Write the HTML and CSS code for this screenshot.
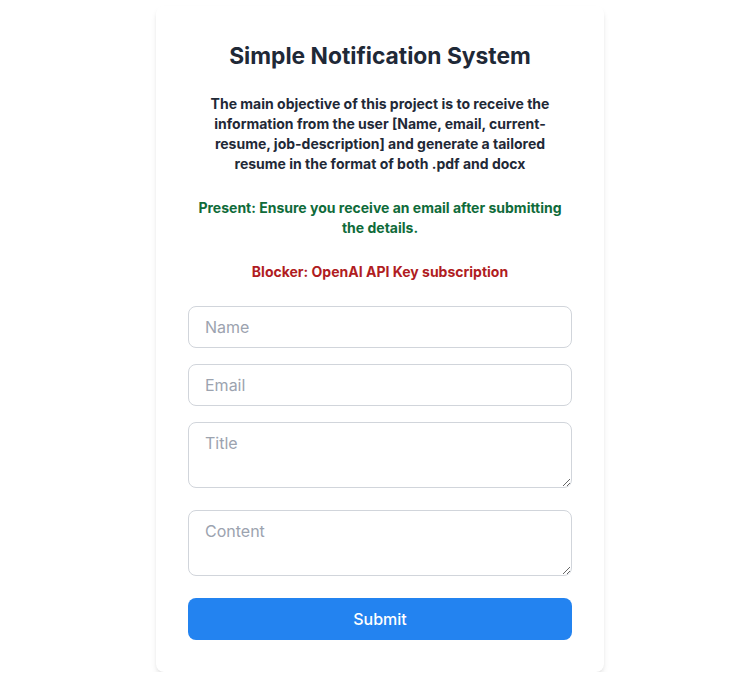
FILE: index.html
```html
<!DOCTYPE html>
<html lang="en">
<head>
<meta charset="utf-8">
<title>Simple Notification System</title>
<link rel="stylesheet" href="styles.css">
</head>
<body>
<main class="page">
  <section class="card">
    <h1 class="title">Simple Notification System</h1>
    <p class="desc">The main objective of this project is to receive the information from the user [Name, email, current-resume, job-description] and generate a tailored resume in the format of both .pdf and docx</p>
    <p class="present">Present: Ensure you receive an email after submitting the details.</p>
    <p class="blocker">Blocker: OpenAI API Key subscription</p>
    <form class="form">
      <input class="field" type="text" placeholder="Name">
      <input class="field" type="email" placeholder="Email">
      <textarea class="field area" rows="2" placeholder="Title"></textarea>
      <textarea class="field area" rows="2" placeholder="Content"></textarea>
      <button class="submit" type="button">Submit</button>
    </form>
  </section>
</main>
</body>
</html>
```
FILE: styles.css
```css
* { box-sizing: border-box; }
html, body { margin: 0; padding: 0; background: #ffffff; }
body { font-family: Inter, "Noto Sans", sans-serif; color: #1f2937; }
.page {
  display: flex;
  justify-content: center;
  padding: 6px 0 0 10px;
}
.card {
  width: 448px;
  background: #ffffff;
  border-radius: 8px;
  box-shadow: 0 4px 6px -1px rgba(0,0,0,0.1), 0 2px 4px -2px rgba(0,0,0,0.1);
  padding: 32px;
  text-align: center;
}
.title {
  margin: 2px 0 22px;
  font-size: 22.8px;
  line-height: 32px;
  font-weight: 700;
  color: #1f2937;
}
.desc, .present, .blocker {
  margin: 0 0 24px;
  font-size: 14px;
  line-height: 20px;
  font-weight: 700;
}
.desc { color: #1f2937; }
.present { color: #0f6b3a; }
.blocker { color: #b01c22; }
.form {
  display: flex;
  flex-direction: column;
  gap: 16px;
}
.field {
  display: block;
  width: 100%;
  margin: 0;
  padding: 8px 16px;
  border: 1px solid #d1d5db;
  border-radius: 8px;
  font-family: Inter, "Noto Sans", sans-serif;
  font-size: 16px;
  line-height: 24px;
  color: #1f2937;
  background: #ffffff;
  outline: none;
}
.field::placeholder { color: #9ca3af; }
.area {
  height: 66px;
  resize: vertical;
  margin-bottom: 6px;
}
.submit {
  display: block;
  width: 100%;
  height: 42px;
  border: none;
  border-radius: 8px;
  background: #2383f0;
  color: #ffffff;
  font-family: Inter, "Noto Sans", sans-serif;
  font-size: 16px;
  line-height: 24px;
  font-weight: 500;
  cursor: pointer;
}
```
